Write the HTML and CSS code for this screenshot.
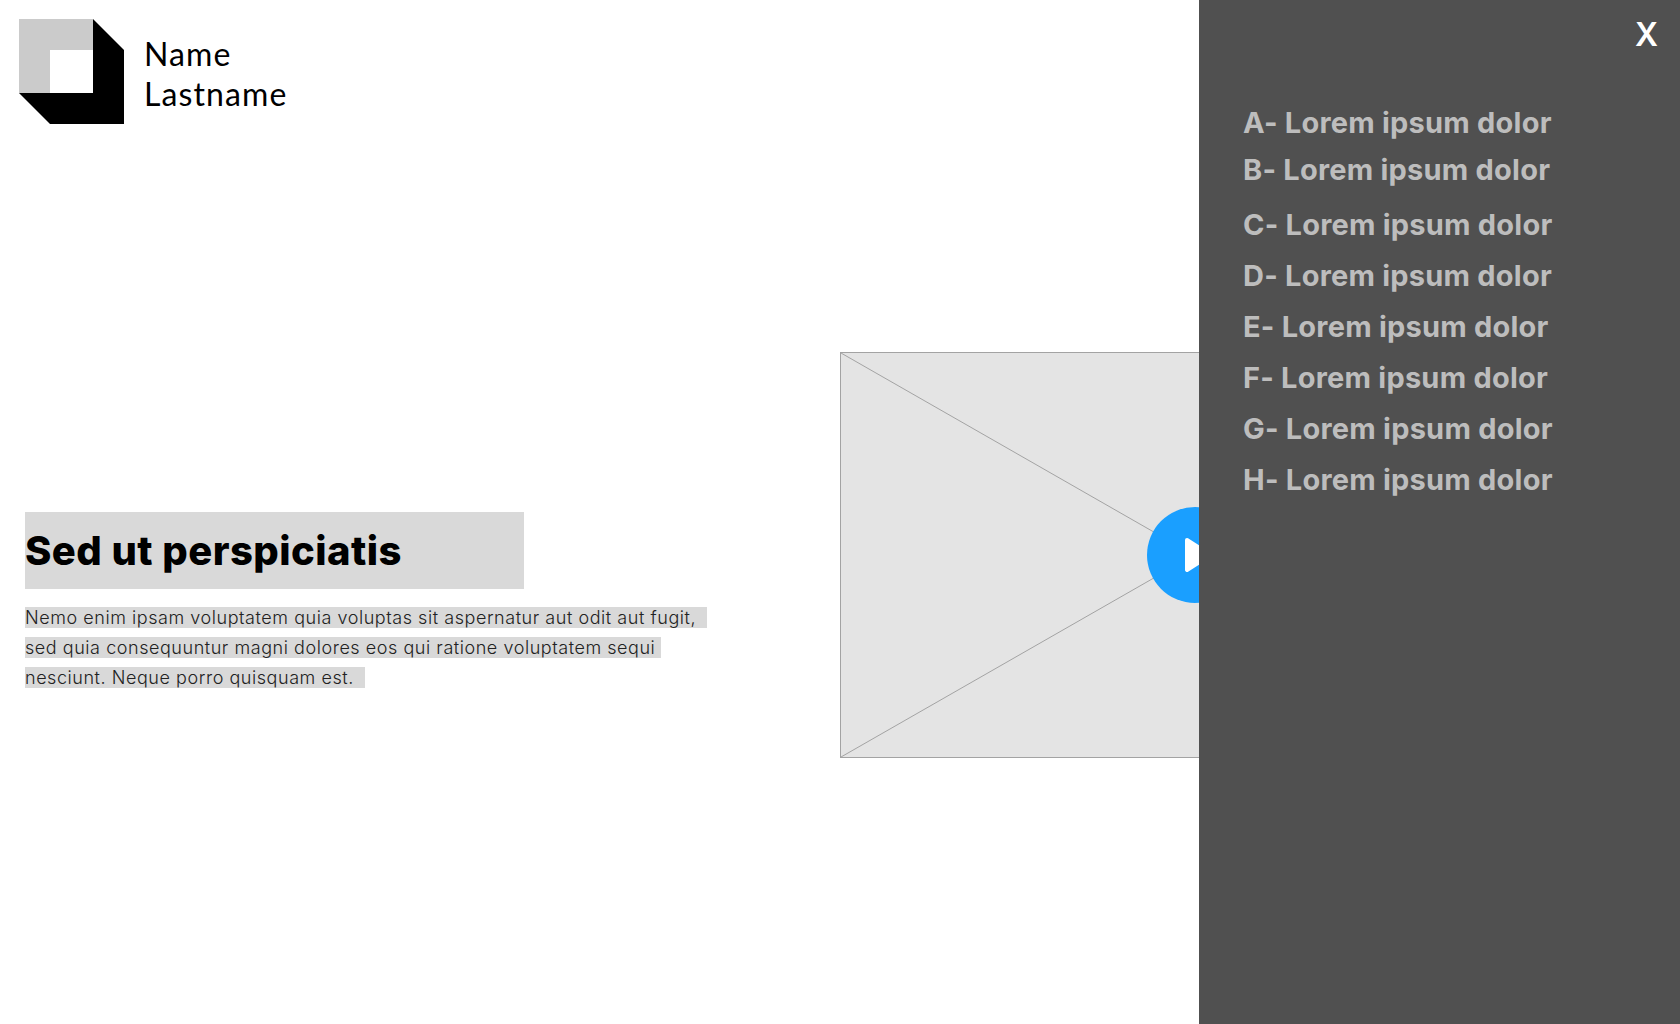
FILE: index.html
```html
<!DOCTYPE html>
<html lang="en">
<head>
    <meta charset="UTF-8">
    <meta name="viewport" content="width=device-width, initial-scale=1.0">
    <title>Name Lastname</title>
    <link rel="stylesheet" href="styles.css">
</head>
<body>

<main class="page">
    <header class="brand">
        <svg class="brand-logo" viewBox="0 0 105 105" width="105" height="105">
            <path fill="#cbcbcb" d="M0 0H74V74H0Z"/>
            <path fill="#fff" d="M31 31H74V74H31Z"/>
            <path fill="#000" d="M74 0L105 31V105H31L0 74H74Z"/>
        </svg>
        <div class="brand-name">Name<br>Lastname</div>
    </header>

    <section class="hero">
        <div class="hero-text">
            <h1 class="hero-title">Sed ut perspiciatis</h1>
            <p class="hero-copy">
                <span>Nemo enim ipsam voluptatem quia voluptas sit aspernatur aut odit aut fugit,&nbsp;&nbsp;</span><br>
                <span>sed quia consequuntur magni dolores eos qui ratione voluptatem sequi&nbsp;</span><br>
                <span>nesciunt. Neque porro quisquam est.&nbsp;&nbsp;</span>
            </p>
        </div>
        <div class="video">
            <svg class="video-cross" viewBox="0 0 708 406" preserveAspectRatio="none">
                <path d="M0 0L708 406M0 406L708 0" stroke="#a3a3a3" stroke-width="1" fill="none"/>
            </svg>
            <div class="video-play">
                <svg class="video-play-icon" viewBox="0 0 28 34" width="28" height="34">
                    <path fill="#fff" stroke="#fff" stroke-width="4" stroke-linejoin="round" d="M2 2L26 17L2 32Z"/>
                </svg>
            </div>
        </div>
    </section>
</main>

<aside class="panel">
    <div class="panel-close">X</div>
    <ul class="panel-menu">
        <li class="menu-a">A- Lorem ipsum dolor</li>
        <li class="menu-b">B- Lorem ipsum dolor</li>
        <li class="menu-c">C- Lorem ipsum dolor</li>
        <li>D- Lorem ipsum dolor</li>
        <li>E- Lorem ipsum dolor</li>
        <li>F- Lorem ipsum dolor</li>
        <li>G- Lorem ipsum dolor</li>
        <li>H- Lorem ipsum dolor</li>
    </ul>
</aside>

</body>
</html>
```

FILE: styles.css
```css
body {
    font-family: 'Inter', 'Liberation Sans', sans-serif;
    background-color: #fff;
    margin: 0;
    padding: 0;
    display: flex;
    height: 100vh;
    overflow: hidden;
}

.page {
    flex: 1;
    min-width: 0;
    overflow: hidden;
}

.brand {
    display: flex;
    align-items: center;
    gap: 20px;
    height: 105px;
    padding: 19px 0 0 19px;
}

.brand-logo {
    display: block;
    flex-shrink: 0;
}

.brand-name {
    font-family: 'Lato', sans-serif;
    font-size: 32px;
    font-weight: 400;
    line-height: 40px;
    color: #000;
    letter-spacing: 1.1px;
    padding-top: 4px;
}

.hero {
    display: flex;
    align-items: flex-start;
    margin-top: 228px;
    padding-left: 25px;
}

.hero-text {
    width: 815px;
    flex-shrink: 0;
    padding-top: 160px;
}

.hero-title {
    width: 499px;
    height: 77px;
    margin: 0;
    background-color: #d9d9d9;
    color: #000;
    font-size: 40px;
    font-weight: 800;
    line-height: 77px;
    letter-spacing: 0.45px;
}

.hero-copy {
    margin: 14px 0 0;
    font-size: 18px;
    font-weight: 300;
    line-height: 30px;
    color: #222;
    letter-spacing: 0.55px;
}

.hero-copy span {
    background-color: #d9d9d9;
}

.video {
    position: relative;
    flex-shrink: 0;
    width: 708px;
    height: 406px;
    box-sizing: border-box;
    background-color: #e4e4e4;
    border: 1px solid #a3a3a3;
}

.video-cross {
    display: block;
    width: 100%;
    height: 100%;
}

.video-play {
    position: absolute;
    left: 306px;
    top: 154px;
    width: 96px;
    height: 96px;
    border-radius: 50%;
    background-color: #1a9fff;
    display: flex;
    align-items: center;
    justify-content: center;
}

.video-play-icon {
    margin-left: 8px;
}

.panel {
    width: 481px;
    flex-shrink: 0;
    background-color: #505050;
    box-sizing: border-box;
    padding: 0 0 0 44px;
    position: relative;
}

.panel-close {
    position: absolute;
    right: 22px;
    top: 15px;
    color: #fff;
    font-size: 32px;
    font-weight: 600;
    line-height: 40px;
}

.panel-menu {
    list-style: none;
    margin: 0;
    padding: 103px 0 0;
    color: #bdbdbd;
    font-size: 29px;
    font-weight: 700;
    line-height: 40px;
    letter-spacing: 0.22px;
}

.panel-menu li {
    margin-bottom: 11px;
}

.panel-menu .menu-a {
    margin-bottom: 7px;
}

.panel-menu .menu-b {
    margin-bottom: 15px;
}
```
